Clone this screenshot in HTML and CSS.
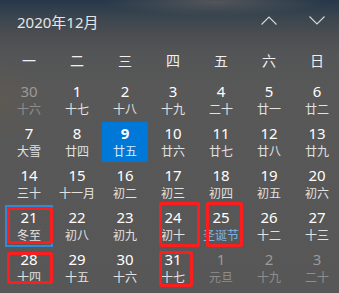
FILE: index.html
```html
<!DOCTYPE html>
<html lang="zh-CN">
<head>
<meta charset="utf-8">
<title>日历</title>
<link rel="stylesheet" href="styles.css">
</head>
<body>
<div class="flyout">
  <div class="header">
    <div class="title">2020年12月</div>
    <div class="nav">
      <span class="nav-btn"><svg width="16" height="9" viewBox="0 0 16 9"><polyline points="0.5,8.5 8,1 15.5,8.5" fill="none" stroke="#d8d8d8" stroke-width="1.1"/></svg></span>
      <span class="nav-btn"><svg width="16" height="9" viewBox="0 0 16 9"><polyline points="0.5,0.5 8,8 15.5,0.5" fill="none" stroke="#d8d8d8" stroke-width="1.1"/></svg></span>
    </div>
  </div>
  <div class="weekdays">
    <span>一</span><span>二</span><span>三</span><span>四</span><span>五</span><span>六</span><span>日</span>
  </div>
  <div class="grid">
    <div class="day other"><span class="num">30</span><span class="lunar">十六</span></div>
    <div class="day"><span class="num">1</span><span class="lunar">十七</span></div>
    <div class="day"><span class="num">2</span><span class="lunar">十八</span></div>
    <div class="day"><span class="num">3</span><span class="lunar">十九</span></div>
    <div class="day"><span class="num">4</span><span class="lunar">二十</span></div>
    <div class="day"><span class="num">5</span><span class="lunar">廿一</span></div>
    <div class="day"><span class="num">6</span><span class="lunar">廿二</span></div>

    <div class="day"><span class="num">7</span><span class="lunar">大雪</span></div>
    <div class="day"><span class="num">8</span><span class="lunar">廿四</span></div>
    <div class="day selected"><span class="num">9</span><span class="lunar">廿五</span></div>
    <div class="day"><span class="num">10</span><span class="lunar">廿六</span></div>
    <div class="day"><span class="num">11</span><span class="lunar">廿七</span></div>
    <div class="day"><span class="num">12</span><span class="lunar">廿八</span></div>
    <div class="day"><span class="num">13</span><span class="lunar">廿九</span></div>

    <div class="day"><span class="num">14</span><span class="lunar">三十</span></div>
    <div class="day"><span class="num">15</span><span class="lunar">十一月</span></div>
    <div class="day"><span class="num">16</span><span class="lunar">初二</span></div>
    <div class="day"><span class="num">17</span><span class="lunar">初三</span></div>
    <div class="day"><span class="num">18</span><span class="lunar">初四</span></div>
    <div class="day"><span class="num">19</span><span class="lunar">初五</span></div>
    <div class="day"><span class="num">20</span><span class="lunar">初六</span></div>

    <div class="day today"><span class="num">21</span><span class="lunar">冬至</span></div>
    <div class="day"><span class="num">22</span><span class="lunar">初八</span></div>
    <div class="day"><span class="num">23</span><span class="lunar">初九</span></div>
    <div class="day"><span class="num">24</span><span class="lunar">初十</span></div>
    <div class="day"><span class="num">25</span><span class="lunar festival">圣诞节</span></div>
    <div class="day"><span class="num">26</span><span class="lunar">十二</span></div>
    <div class="day"><span class="num">27</span><span class="lunar">十三</span></div>

    <div class="day"><span class="num">28</span><span class="lunar">十四</span></div>
    <div class="day"><span class="num">29</span><span class="lunar">十五</span></div>
    <div class="day"><span class="num">30</span><span class="lunar">十六</span></div>
    <div class="day"><span class="num">31</span><span class="lunar">十七</span></div>
    <div class="day other"><span class="num">1</span><span class="lunar">元旦</span></div>
    <div class="day other"><span class="num">2</span><span class="lunar">十九</span></div>
    <div class="day other"><span class="num">3</span><span class="lunar">二十</span></div>
  </div>

  <div class="mark mark-21"></div>
  <div class="mark mark-28"></div>
  <div class="mark mark-24"></div>
  <div class="mark mark-25"></div>
  <div class="mark mark-31"></div>
</div>
</body>
</html>
```
FILE: styles.css
```css
html, body {
  margin: 0;
  padding: 0;
}
body {
  width: 339px;
  height: 293px;
  overflow: hidden;
  background: #575757;
  font-family: "Noto Sans", "Noto Sans CJK SC", sans-serif;
  color: #ffffff;
}
.flyout {
  position: relative;
  width: 339px;
  height: 293px;
  background:
    radial-gradient(ellipse 110px 14px at 215px 2px, rgba(90,90,92,0.85), rgba(90,90,92,0) 100%),
    radial-gradient(ellipse 40px 40px at 0px 100px, rgba(110,95,70,0.25), rgba(110,95,70,0) 100%),
    linear-gradient(to bottom, #26384a 0px, #37434e 14px, #4b4e51 34px, #545556 56px, #585858 90px, #575757 293px);
}
.header {
  height: 40px;
  display: flex;
  align-items: center;
  justify-content: space-between;
  padding: 0 14px 0 17px;
  box-sizing: border-box;
}
.title {
  font-size: 15px;
  color: #e6e6e6;
  margin-top: 2px;
}
.nav {
  display: flex;
  gap: 32px;
  align-items: center;
  margin-top: 1px;
}
.nav-btn {
  display: flex;
  width: 16px;
  height: 9px;
}
.weekdays {
  display: grid;
  grid-template-columns: repeat(7, 48px);
  height: 39px;
  padding-left: 5px;
  align-items: center;
  font-family: "Noto Sans CJK SC", sans-serif;
  font-size: 14px;
  color: #f0f0f0;
}
.weekdays span {
  text-align: center;
}
.grid {
  display: grid;
  grid-template-columns: repeat(7, 48px);
  grid-auto-rows: 42px;
  padding-left: 5px;
}
.day {
  margin: 1px;
  display: flex;
  flex-direction: column;
  align-items: center;
  justify-content: flex-start;
  padding-top: 1px;
  box-sizing: border-box;
  white-space: nowrap;
}
.num {
  display: block;
  font-size: 15px;
  line-height: 20px;
  height: 20px;
  color: #ffffff;
}
.lunar {
  display: block;
  font-family: "Noto Sans CJK SC", sans-serif;
  font-size: 12px;
  line-height: 16px;
  height: 16px;
  color: #e2e2e2;
}
.other .num {
  color: #9a9a9a;
}
.other .lunar {
  color: #8e8e8e;
}
.festival {
  color: #7fb3e0;
}
.selected {
  background: #0078d7;
}
.selected .num {
  font-weight: 700;
}
.selected .lunar {
  color: #d6eaff;
}
.today {
  box-shadow: 0 0 0 1px #2f8ad8, inset 0 0 0 1px #2f8ad8;
}
.mark {
  position: absolute;
  border: 3px solid #fa1e1e;
  border-radius: 2px;
  box-sizing: border-box;
}
.mark-21 { left: 7px; top: 207px; width: 46px; height: 37px; }
.mark-28 { left: 7px; top: 252px; width: 46px; height: 32px; }
.mark-24 { left: 159px; top: 202px; width: 41px; height: 45px; }
.mark-25 { left: 206px; top: 202px; width: 37px; height: 45px; }
.mark-31 { left: 159px; top: 251px; width: 34px; height: 36px; }
```
